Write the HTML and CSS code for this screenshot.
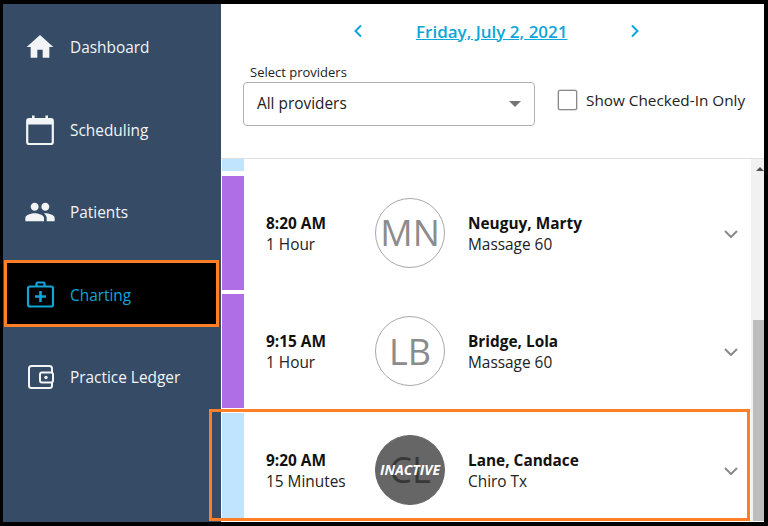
FILE: index.html
```html
<!DOCTYPE html>
<html>
<head>
    <title>Charting</title>
    <link rel="stylesheet" href="styles.css">
</head>
<body>
    <div class="app">
        <nav class="sidebar">
            <a class="nav-item">
                <svg class="nav-icon" viewBox="0 0 24 24"><path fill="currentColor" d="M10 20v-6h4v6h5v-8h3L12 3 2 12h3v8z"/></svg>
                <span>Dashboard</span>
            </a>
            <a class="nav-item">
                <svg class="nav-icon" viewBox="0 0 32 32"><rect x="3.2" y="5" width="25.6" height="25" rx="2" fill="none" stroke="currentColor" stroke-width="2.2"/><path fill="currentColor" d="M3 5h26v5.5H3zM8 1.5h2.6V6H8zM21.4 1.5H24V6h-2.6z"/></svg>
                <span>Scheduling</span>
            </a>
            <a class="nav-item">
                <svg class="nav-icon" viewBox="0 0 24 24"><path fill="currentColor" d="M16 11c1.66 0 2.99-1.34 2.99-3S17.66 5 16 5c-1.66 0-3 1.34-3 3s1.34 3 3 3zm-8 0c1.66 0 2.99-1.34 2.99-3S9.66 5 8 5C6.34 5 5 6.34 5 8s1.34 3 3 3zm0 2c-2.33 0-7 1.17-7 3.5V19h14v-2.5c0-2.33-4.67-3.5-7-3.5zm8 0c-.29 0-.62.02-.97.05 1.16.84 1.97 1.97 1.97 3.45V19h6v-2.5c0-2.33-4.67-3.5-7-3.5z"/></svg>
                <span>Patients</span>
            </a>
            <a class="nav-item active">
                <svg class="nav-icon" viewBox="0 0 32 32"><rect x="4" y="7.500" width="25" height="20" rx="2" fill="none" stroke="currentColor" stroke-width="2.200"/><path fill="none" stroke="currentColor" stroke-width="2.200" d="M12.500 7.500V4.500c0-.6.4-1 1-1h6c.6 0 1 .4 1 1v3"/><path fill="currentColor" d="M15.200 12h2.600v4.200H22v2.600h-4.200V23h-2.600v-4.200H11v-2.600h4.200z"/></svg>
                <span>Charting</span>
            </a>
            <a class="nav-item">
                <svg class="nav-icon" viewBox="0 0 32 32"><rect x="5" y="5" width="23" height="22" rx="2.500" fill="none" stroke="currentColor" stroke-width="2"/><rect x="16" y="11.500" width="13" height="10" rx="2" fill="#364c66" stroke="currentColor" stroke-width="2"/><circle cx="22" cy="16.500" r="1.700" fill="currentColor"/></svg>
                <span>Practice Ledger</span>
            </a>
        </nav>

        <main class="main">
            <header class="top">
                <div class="date-nav">
                    <svg class="date-arrow" viewBox="0 0 12 16"><path d="M9 2.500 3.500 8 9 13.500"/></svg>
                    <a class="date-link">Friday, July 2, 2021</a>
                    <svg class="date-arrow" viewBox="0 0 12 16"><path d="M3 2.500 8.500 8 3 13.500"/></svg>
                </div>
                <div class="filters">
                    <div class="provider-field">
                        <label class="provider-label">Select providers</label>
                        <div class="provider-select">
                            <span class="provider-value">All providers</span>
                            <span class="select-caret"></span>
                        </div>
                    </div>
                    <label class="checked-in">
                        <input type="checkbox" class="checkbox">
                        <span>Show Checked-In Only</span>
                    </label>
                </div>
            </header>

            <div class="schedule">
                <div class="rows">
                    <div class="row-tail"><span class="tab tab-blue"></span></div>

                    <div class="row">
                        <span class="tab tab-purple"></span>
                        <div class="time"><b>8:20 AM</b><span>1 Hour</span></div>
                        <div class="avatar">MN</div>
                        <div class="patient"><b>Neuguy, Marty</b><span>Massage 60</span></div>
                        <svg class="expand" viewBox="0 0 14 8"><path d="M1 1l6 6 6-6"/></svg>
                    </div>

                    <div class="row">
                        <span class="tab tab-purple"></span>
                        <div class="time"><b>9:15 AM</b><span>1 Hour</span></div>
                        <div class="avatar">LB</div>
                        <div class="patient"><b>Bridge, Lola</b><span>Massage 60</span></div>
                        <svg class="expand" viewBox="0 0 14 8"><path d="M1 1l6 6 6-6"/></svg>
                    </div>

                    <div class="row">
                        <span class="tab tab-blue"></span>
                        <div class="time"><b>9:20 AM</b><span>15 Minutes</span></div>
                        <div class="avatar inactive">CL<span class="inactive-tag">INACTIVE</span></div>
                        <div class="patient"><b>Lane, Candace</b><span>Chiro Tx</span></div>
                        <svg class="expand" viewBox="0 0 14 8"><path d="M1 1l6 6 6-6"/></svg>
                    </div>
                </div>
                <div class="scrollbar">
                    <span class="scroll-up"></span>
                    <span class="scroll-thumb"></span>
                </div>
            </div>
        </main>

        <div class="highlight"></div>
    </div>
</body>
</html>
```

FILE: styles.css
```css
* {
    box-sizing: border-box;
}

html, body {
    height: 100%;
}

body {
    margin: 0;
    padding: 4px 4px 4px 3px;
    background-color: #000000;
    font-family: "Open Sans", sans-serif;
    color: #222222;
    overflow: hidden;
}

.app {
    position: relative;
    display: flex;
    height: 518px;
}

/* sidebar */
.sidebar {
    width: 218px;
    flex-shrink: 0;
    display: flex;
    flex-direction: column;
    gap: 16.5px;
    padding: 10px 2px 0 1px;
    background-color: #364c66;
    color: #f2f4f6;
}

.nav-item {
    display: flex;
    align-items: center;
    gap: 14px;
    height: 66px;
    padding-left: 17px;
    border: 3px solid transparent;
    font-size: 15.4px;
}

.nav-item span {
    padding-top: 1px;
}

.nav-item.active {
    height: 67px;
    margin-top: -1.5px;
    margin-bottom: 0.5px;
    padding-top: 2px;
    background-color: #000000;
    border-color: #ff7f27;
    color: #0ea5d8;
}

.nav-icon {
    width: 32px;
    height: 32px;
    flex-shrink: 0;
}

/* top filters */
.main {
    flex: 1;
    min-width: 0;
    display: flex;
    flex-direction: column;
    background-color: #ffffff;
}

.top {
    height: 155px;
    flex-shrink: 0;
    border-bottom: 1px solid #dfe1e3;
}

.date-nav {
    display: flex;
    align-items: center;
    gap: 52px;
    height: 24px;
    margin-top: 15px;
    padding-left: 131px;
}

.date-arrow {
    width: 12px;
    height: 16px;
    fill: none;
    stroke: #0ea5d8;
    stroke-width: 2;
}

.date-arrow:last-child {
    margin-left: 9px;
}

.date-link {
    color: #0ea5d8;
    font-size: 17px;
    font-weight: 600;
    text-decoration: underline;
}

.filters {
    display: flex;
    margin-top: 22px;
    padding-left: 22px;
}

.provider-field {
    width: 292px;
}

.provider-label {
    display: block;
    height: 17px;
    padding-left: 7px;
    font-size: 13px;
    line-height: 15px;
}

.provider-select {
    display: flex;
    align-items: center;
    justify-content: space-between;
    height: 44px;
    padding: 0 13px;
    border: 1px solid #b0b0b0;
    border-radius: 4px;
    font-size: 15.4px;
}

.provider-value {
    margin-bottom: 2px;
}

.select-caret {
    width: 0;
    height: 0;
    border-left: 6px solid transparent;
    border-right: 6px solid transparent;
    border-top: 6px solid #757575;
}

.checked-in {
    display: flex;
    align-items: center;
    gap: 9px;
    height: 20px;
    margin: 25px 0 0 23px;
    font-size: 15.3px;
    white-space: nowrap;
}

.checkbox {
    appearance: none;
    width: 19px;
    height: 20px;
    margin: 0;
    border: 1px solid #8a8a8a;
    border-radius: 2px;
    background-color: #ffffff;
    box-shadow: 0 0 0 0.5px #b0b0b0;
}

/* schedule list */
.schedule {
    flex: 1;
    min-height: 0;
    display: flex;
}

.rows {
    flex: 1;
    min-width: 0;
    height: 360px;
    overflow: hidden;
    padding-left: 1px;
}

.row-tail {
    height: 12px;
    margin-bottom: 4.9px;
}

.row-tail .tab {
    height: 12px;
}

.row {
    display: flex;
    align-items: center;
    height: 114px;
    margin-bottom: 4.5px;
}

.tab {
    display: block;
    width: 22px;
    height: 100%;
    flex-shrink: 0;
}

.tab-blue {
    background-color: #c1e4fe;
}

.tab-purple {
    background-color: #b06ee6;
}

.time {
    width: 109px;
    margin-left: 22px;
    padding-top: 1.4px;
}

.time b,
.time span,
.patient b,
.patient span {
    display: block;
    font-size: 15.4px;
    line-height: 21px;
}

.time b,
.patient b {
    font-weight: 700;
    color: #111111;
}

.avatar {
    position: relative;
    width: 70px;
    height: 70px;
    flex-shrink: 0;
    display: flex;
    align-items: center;
    justify-content: center;
    border: 1px solid #a8a8a8;
    border-radius: 50%;
    color: #8c8c8c;
    font-size: 36px;
}

.avatar.inactive {
    background-color: #666666;
    border-color: #666666;
    color: #383838;
}

.inactive-tag {
    position: absolute;
    left: 0;
    right: 0;
    text-align: center;
    color: #ffffff;
    font-size: 14px;
    font-weight: 700;
    font-style: italic;
}

.patient {
    flex: 1;
    margin-left: 23px;
    padding-top: 1.4px;
}

.expand {
    width: 14px;
    height: 8px;
    margin: 2px 13px 0 0;
    fill: none;
    stroke: #8a8a8a;
    stroke-width: 2;
}

/* scrollbar */
.scrollbar {
    width: 13px;
    flex-shrink: 0;
    display: flex;
    flex-direction: column;
    height: 362px;
    background-color: #f1f1f1;
}

.scroll-up {
    width: 0;
    height: 0;
    margin: 8px 0 0 5px;
    border-left: 4px solid transparent;
    border-right: 4px solid transparent;
    border-bottom: 4px solid #505050;
}

.scroll-thumb {
    margin-top: auto;
    height: 201px;
    margin-left: 2px;
    background-color: #bdbdbd;
}

/* annotation box */
.highlight {
    position: absolute;
    left: 206px;
    top: 405px;
    width: 541px;
    height: 112px;
    border: 3px solid #ff7f27;
    pointer-events: none;
}
```
